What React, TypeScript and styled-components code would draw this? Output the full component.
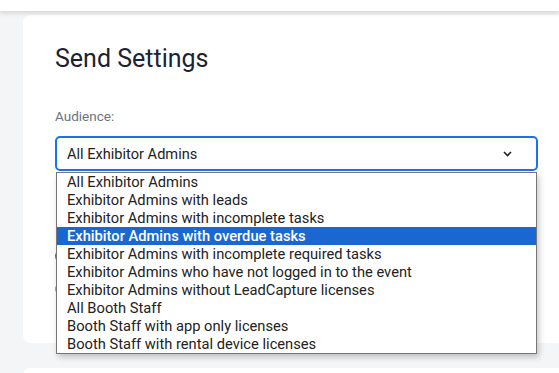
import styled, { createGlobalStyle } from "styled-components";

const audienceOptions = [
    "All Exhibitor Admins",
    "Exhibitor Admins with leads",
    "Exhibitor Admins with incomplete tasks",
    "Exhibitor Admins with overdue tasks",
    "Exhibitor Admins with incomplete required tasks",
    "Exhibitor Admins who have not logged in to the event",
    "Exhibitor Admins without LeadCapture licenses",
    "All Booth Staff",
    "Booth Staff with app only licenses",
    "Booth Staff with rental device licenses",
];

function App() {
    return (
        <>
            <GlobalStyle />
            <TopBar />
            <Main>
                <Card>
                    <Title>Send Settings</Title>
                    <FieldLabel>Audience:</FieldLabel>
                    <SelectWrap>
                        <SelectBox>
                            <span>All Exhibitor Admins</span>
                            <Chevron width="9" height="6" viewBox="0 0 9 6">
                                <path d="M1 1l3.5 3.5L8 1" fill="none" stroke="#222" strokeWidth="1.6" />
                            </Chevron>
                        </SelectBox>
                        <OptionList>
                            {audienceOptions.map((opt, i) => (
                                <OptionRow key={opt} $active={i === 3}>{opt}</OptionRow>
                            ))}
                        </OptionList>
                    </SelectWrap>

                    {/* send time radios, mostly covered by the open list */}
                    <RadioGroup>
                        <Radio $checked />
                        <Radio />
                    </RadioGroup>
                </Card>
                <Card $short />
            </Main>
        </>
    );
}

// STYLING
const GlobalStyle = createGlobalStyle`
    body {
        margin: 0;
        background: #f4f5f7;
        font-family: 'Roboto', 'Liberation Sans', sans-serif;
        color: #1f2433;
        overflow: hidden;
    }
`;

const TopBar = styled.div`
    height: 11px;
    background: #ffffff;
    box-shadow: 0 2px 5px rgba(0,0,0,0.14);
    position: relative;
    z-index: 2;
`;

const Main = styled.div`
    padding: 4px 0 0 23px;
    display: flex;
    flex-direction: column;
    gap: 25px;
`;

const Card = styled.div<{ $short?: boolean }>`
    background: #ffffff;
    border-radius: 8px 0 0 8px;
    height: ${p => p.$short ? '40px' : '298px'};
    padding: 30px 0 0 32px;
    position: relative;
`;

const Title = styled.h1`
    margin: 0;
    font-size: 25px;
    font-weight: 400;
    line-height: 28px;
    color: #1d2232;
`;

const FieldLabel = styled.div`
    margin-top: 35px;
    font-size: 13.5px;
    line-height: 16px;
    color: #6b7280;
`;

const SelectWrap = styled.div`
    margin-top: 12px;
    position: relative;
    width: 483px;
`;

const SelectBox = styled.div`
    box-sizing: border-box;
    height: 35px;
    border: 2px solid #1a73e8;
    border-radius: 5px;
    display: flex;
    align-items: center;
    justify-content: space-between;
    padding: 0 24px 0 10px;
    font-size: 14.6px;
    color: #222;
`;

const Chevron = styled.svg`
    display: block;
`;

const OptionList = styled.div`
    position: absolute;
    top: 36px;
    left: 1px;
    width: 481px;
    box-sizing: border-box;
    background: #ffffff;
    border: 1px solid #767676;
    box-shadow: 2px 3px 6px rgba(0,0,0,0.22);
    z-index: 5;
`;

const OptionRow = styled.div<{ $active?: boolean }>`
    height: 18px;
    line-height: 18px;
    padding-left: 10px;
    font-size: 14.7px;
    white-space: nowrap;
    background: ${p => p.$active ? '#1a67d2' : 'transparent'};
    color: ${p => p.$active ? '#ffffff' : '#222'};
    font-weight: ${p => p.$active ? 500 : 400};
`;

const RadioGroup = styled.div`
    display: flex;
    flex-direction: column;
    gap: 19px;
    margin-top: 78px;
`;

const Radio = styled.span<{ $checked?: boolean }>`
    width: 14px;
    height: 14px;
    box-sizing: border-box;
    border-radius: 50%;
    border: ${p => p.$checked ? '4px solid #1a73e8' : '1px solid #9aa0a6'};
`;

export default App;
